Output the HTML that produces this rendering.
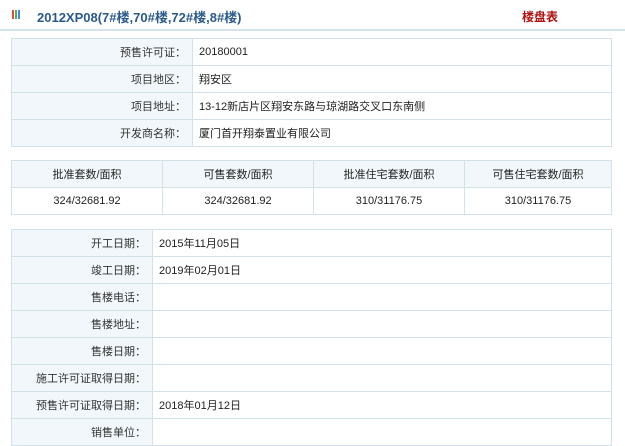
<!DOCTYPE html>
<html><head><meta charset="utf-8"><style>
body{margin:0;width:625px;height:425px;overflow:hidden;background:#fff;font-family:"Liberation Sans","Noto Sans CJK SC",sans-serif;font-size:11px;color:#222}
.hd{position:absolute;left:0;top:0;width:625px;height:29px;background:#fff;border-bottom:2px solid #d6e3ea}
.ic{position:absolute;left:12px;top:10px;width:8px;height:9px;background:
linear-gradient(90deg,#e44 0 2px,transparent 2px 3px,#4b4 3px 5px,transparent 5px 6px,#48e 6px 8px);}
.t{position:absolute;left:37px;top:7px;font-size:13px;font-weight:bold;color:#2a5a8c}
.r{position:absolute;left:522px;top:8px;font-size:12px;font-weight:bold;color:#b01010}
table{position:absolute;border-collapse:collapse;left:11px;width:601px}
td{border:1px solid #d3e1e8;padding:0 6px;height:26px}
td.l{background:#f1f7fa;text-align:right;color:#333}
.g td{text-align:center}
.g tr:first-child td{background:#f1f7fa}
</style></head><body>
<div class="hd"><div class="ic"></div><div class="t">2012XP08(7#楼,70#楼,72#楼,8#楼)</div><div class="r">楼盘表</div></div>
<table style="top:38px">
<tr><td class="l" style="width:168px">预售许可证：</td><td>20180001</td></tr>
<tr><td class="l">项目地区：</td><td>翔安区</td></tr>
<tr><td class="l">项目地址：</td><td>13-12新店片区翔安东路与琼湖路交叉口东南侧</td></tr>
<tr><td class="l">开发商名称：</td><td>厦门首开翔泰置业有限公司</td></tr>
</table>
<table class="g" style="top:160px">
<tr><td style="width:138px">批准套数/面积</td><td style="width:138px">可售套数/面积</td><td style="width:138px">批准住宅套数/面积</td><td>可售住宅套数/面积</td></tr>
<tr><td style="height:23px">324/32681.92</td><td>324/32681.92</td><td>310/31176.75</td><td>310/31176.75</td></tr>
</table>
<table style="top:229px">
<tr><td class="l" style="width:128px">开工日期：</td><td>2015年11月05日</td></tr>
<tr><td class="l">竣工日期：</td><td>2019年02月01日</td></tr>
<tr><td class="l">售楼电话：</td><td></td></tr>
<tr><td class="l">售楼地址：</td><td></td></tr>
<tr><td class="l">售楼日期：</td><td></td></tr>
<tr><td class="l">施工许可证取得日期：</td><td></td></tr>
<tr><td class="l">预售许可证取得日期：</td><td>2018年01月12日</td></tr>
<tr><td class="l">销售单位：</td><td></td></tr>
</table>
</body></html>
